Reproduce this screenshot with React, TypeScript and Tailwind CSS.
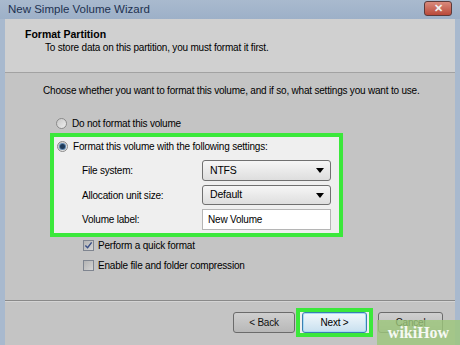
const FONT = { fontFamily: '"Liberation Sans", Arial, sans-serif' }
const TXT = 'text-[10px] tracking-[-0.2px] text-black'

function Radio({ checked = false }: { checked?: boolean }) {
  return (
    <span className="w-[11px] h-[11px] rounded-full border border-[#8a8a8a] bg-gradient-to-br from-[#c8c8c8] to-[#eeeeee] flex items-center justify-center shrink-0">
      {checked && <span className="w-[5px] h-[5px] rounded-full bg-[#1f3b5a] ring-1 ring-[#5d86b0]" />}
    </span>
  )
}

function Checkbox({ checked = false }: { checked?: boolean }) {
  return (
    <span className="w-[11px] h-[11px] border border-[#7f8590] bg-gradient-to-br from-[#b4b4b4] to-[#d4d4d4] flex items-center justify-center shrink-0">
      {checked && (
        <svg viewBox="0 0 10 10" className="w-[9px] h-[9px]">
          <path d="M1.5 5 L4 7.5 L8.5 1.5" fill="none" stroke="#3a4f86" strokeWidth="1.6" />
        </svg>
      )}
    </span>
  )
}

function Select({ value, h }: { value: string; h: string }) {
  return (
    <div className={`w-[129px] ${h} rounded-[3px] border border-[#707070] bg-gradient-to-b from-[#f6f6f6] to-[#dedede] flex items-center justify-between pl-[7px] pr-[6px] text-[10.5px] text-black`}>
      <span>{value}</span>
      <svg viewBox="0 0 8 5" className="w-[8px] h-[5px]">
        <path d="M0 0 H8 L4 5 Z" fill="#000" />
      </svg>
    </div>
  )
}

export default function App() {
  return (
    <div className="relative w-[460px] h-[345px] overflow-hidden bg-[#a8b9ce] flex flex-col" style={FONT}>
      {/* title bar */}
      <div className="h-[19px] flex items-center justify-between pl-[8px] pr-[8px] bg-gradient-to-b from-[#a9bace] to-[#9db0c8]">
        <span className="text-[11.5px] text-[#1d3150] leading-none">New Simple Volume Wizard</span>
        <div className="w-[28px] h-[15px] -mt-[2px] rounded-[3px] border border-[#5b3a3a] bg-gradient-to-b from-[#d98a7c] to-[#b9493a] flex items-center justify-center">
          <span className="text-[11px] font-bold text-[#f0f0f0] leading-none">✕</span>
        </div>
      </div>

      <div className="flex-1 mx-[5px] bg-[#c4c4c4] flex flex-col">
        {/* header */}
        <div className={`h-[54px] bg-[#d0d0d0] border-b border-[#a2a2a2] pt-[8px] leading-[14px] ${TXT}`}>
          <div className="pl-[20px] font-bold text-[10.5px] tracking-normal">Format Partition</div>
          <div className="pl-[40px]">To store data on this partition, you must format it first.</div>
        </div>

        <div className={`h-[34px] flex items-center pl-[38px] whitespace-nowrap ${TXT}`}>
          Choose whether you want to format this volume, and if so, what settings you want to use.
        </div>

        <div className={`h-[19px] mt-[7px] flex items-center gap-[5px] pl-[51px] ${TXT}`}>
          <Radio />
          <span>Do not format this volume</span>
        </div>

        {/* highlighted settings */}
        <div className={`ml-[45px] w-[293px] h-[104px] border-[4px] border-[#3be83b] bg-[#efefef] flex flex-col ${TXT}`}>
          <div className="h-[18px] flex items-center gap-[5px] pl-[3px]">
            <Radio checked />
            <span>Format this volume with the following settings:</span>
          </div>
          <div className="mt-[5px] flex items-center pl-[28px]">
            <span className="w-[120px]">File system:</span>
            <Select value="NTFS" h="h-[21px]" />
          </div>
          <div className="mt-[4px] flex items-center pl-[28px]">
            <span className="w-[120px]">Allocation unit size:</span>
            <Select value="Default" h="h-[20px]" />
          </div>
          <div className="mt-[4px] flex items-center pl-[28px]">
            <span className="w-[120px]">Volume label:</span>
            <div className="w-[129px] h-[21px] border border-[#b5b5b5] bg-white flex items-center pl-[5px]">New Volume</div>
          </div>
        </div>

        <div className={`h-[16px] flex items-center gap-[4px] pl-[78px] ${TXT}`}>
          <Checkbox checked />
          <span>Perform a quick format</span>
        </div>
        <div className={`h-[16px] mt-[4px] flex items-center gap-[4px] pl-[78px] ${TXT}`}>
          <Checkbox />
          <span>Enable file and folder compression</span>
        </div>

        <div className="flex-1" />

        <div className="border-t border-[#8a8a8a] border-b border-b-[#d4d4d4]" />

        <div className={`pt-[6px] pb-[8px] flex items-center justify-end pr-[12px] ${TXT}`}>
          <div className="w-[62px] h-[21px] rounded-[3px] border border-[#6b6b6b] bg-gradient-to-b from-[#cfcfcf] to-[#b8b8b8] flex items-center justify-center text-[#111]">
            &lt; Back
          </div>
          <div className="ml-[1px] border-[4px] border-[#3be83b] px-[2px] bg-[#efefef]">
            <div className="w-[65px] h-[21px] rounded-[3px] border border-[#3c7fb1] bg-gradient-to-b from-[#f2f8fc] to-[#c8e0ef] shadow-[inset_0_0_0_1px_#a8dbf5] flex items-center justify-center">
              Next &gt;
            </div>
          </div>
          <div className="ml-[5px] w-[65px] h-[21px] rounded-[3px] border border-[#6b6b6b] bg-gradient-to-b from-[#cfcfcf] to-[#b8b8b8] flex items-center justify-center text-[#111]">
            Cancel
          </div>
        </div>
      </div>

      {/* watermark */}
      <div className="absolute right-0 bottom-0 w-[83px] h-[25px] bg-[#9cc77a]/80 flex items-center justify-center">
        <span className="text-[16px] text-white/90 leading-none font-bold" style={{ fontFamily: '"Liberation Serif", serif' }}>
          wikiHow
        </span>
      </div>
    </div>
  )
}
